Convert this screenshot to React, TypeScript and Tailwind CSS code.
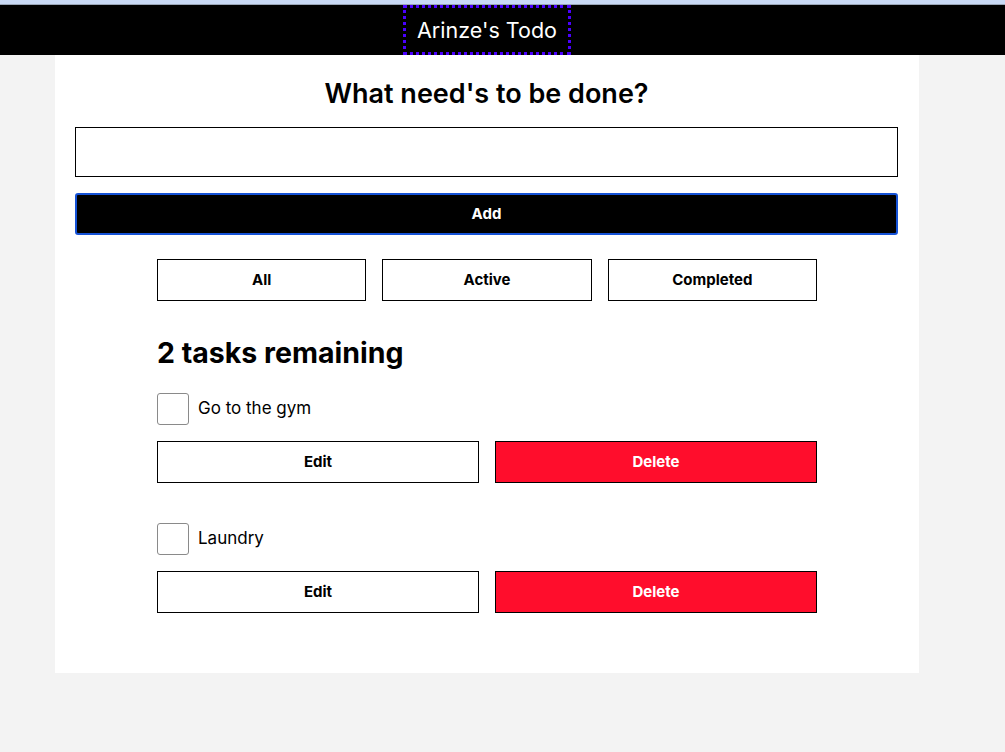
import { useState } from 'react';

const tasks = [
  { id: 1, name: 'Go to the gym' },
  { id: 2, name: 'Laundry' },
];

export default function App() {
  const [text, setText] = useState('');

  return (
    <div className="min-h-[752px] bg-[#f3f3f3] font-['Inter',sans-serif] text-black">
      <div className="h-[4px] bg-[#c9d9f5]" />
      <div className="h-[1px] bg-[#9aa6b8]" />
      <header className="h-[50px] bg-black">
        <div className="ml-[55px] w-[864px] flex justify-center">
          <h1 className="h-[50px] px-[14px] flex items-center text-[21.5px] text-white outline-[3px] outline-dotted outline-[#4a00ff] -outline-offset-[3px]">
            Arinze's Todo
          </h1>
        </div>
      </header>

      <main className="ml-[55px] w-[864px] bg-white pt-[20px] pb-[60px]">
        <form className="px-[20px] pr-[21px]" onSubmit={(e) => e.preventDefault()}>
          <h2 className="text-center text-[27px] font-semibold leading-[38px]">
            What need's to be done?
          </h2>
          <input
            type="text"
            value={text}
            onChange={(e) => setText(e.target.value)}
            className="mt-[14px] block w-full h-[50px] border border-black px-3 text-lg"
          />
          <button
            type="submit"
            className="mt-[16px] w-full h-[42px] bg-black text-white text-[15px] font-bold rounded-[3px] border-2 border-[#1552d6]"
          >
            Add
          </button>
        </form>

        <div className="w-[660px] mx-auto">
          <div className="mt-[24px] grid grid-cols-3 gap-[16px]">
            {['All', 'Active', 'Completed'].map((f) => (
              <button key={f} className="h-[42px] border border-black text-[15px] font-bold">
                {f}
              </button>
            ))}
          </div>

          <h2 className="mt-[32px] text-[28.5px] font-bold leading-[40px]">2 tasks remaining</h2>

          <ul className="mt-[20px] flex flex-col gap-[40px]">
            {tasks.map((t) => (
              <li key={t.id}>
                <div className="flex items-center gap-[9px]">
                  <span className="w-[32px] h-[32px] rounded-[3px] border border-[#8a8a8a] bg-white" />
                  <label className="text-[17px]">{t.name}</label>
                </div>
                <div className="mt-[16px] grid grid-cols-2 gap-[16px]">
                  <button className="h-[42px] border border-black text-[15px] font-bold">Edit</button>
                  <button className="h-[42px] border border-black bg-[#ff0d2c] text-white text-[15px] font-bold">
                    Delete
                  </button>
                </div>
              </li>
            ))}
          </ul>
        </div>
      </main>
    </div>
  );
}
